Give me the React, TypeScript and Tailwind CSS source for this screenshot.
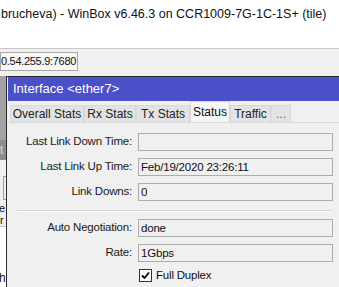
import React from 'react';

const tabs = ['Overall Stats', 'Rx Stats', 'Tx Stats', 'Status', 'Traffic', '...'];
const tabWidths = ['w-[74px]', 'w-[52px]', 'w-[54px]', 'w-[40px]', 'w-[41px]', 'w-[20px]'];

function Field({ label, value }: { label: string; value: string }) {
  return (
    <div className="flex items-center h-[18px]">
      <div className="w-[126px] shrink-0 pr-[1px] text-right text-[11.5px] tracking-[-0.2px] text-[#1a1a1a] whitespace-nowrap">{label}</div>
      <div className="ml-[5px] w-[195px] h-[18px] border border-[#acacac] bg-[#f0f0f0] px-[2px] text-[11.5px] tracking-[-0.2px] leading-[16px] text-[#111]">
        {value}
      </div>
    </div>
  );
}

export default function App() {
  return (
    <div className="w-[339px] h-[287px] overflow-hidden bg-white flex flex-col" style={{ fontFamily: '"Liberation Sans", Arial, sans-serif' }}>
      {/* Window caption */}
      <div className="h-[48px] shrink-0 pt-[5px] pl-[1px] text-[12.5px] text-[#111] whitespace-nowrap">
        brucheva) - WinBox v6.46.3 on CCR1009-7G-1C-1S+ (tile)
      </div>

      {/* Toolbar */}
      <div className="h-[28px] shrink-0 border-t border-[#c8c8c8] bg-[#f0f0f0] pt-[3px]">
        <div className="w-[78px] h-[19px] border border-[#a8a8a8] bg-[#f7f7f7] text-[11px] tracking-[-0.3px] leading-[17px] text-[#111] whitespace-nowrap">0.54.255.9:7680</div>
      </div>

      {/* Desktop area */}
      <div className="flex flex-1 min-h-0">
        {/* Windows behind */}
        <div className="w-[6px] shrink-0 flex flex-col overflow-hidden bg-[#f0f0f0]">
          <div className="h-[64px] shrink-0 bg-[#a3a3a3]" />
          <div className="h-[20px] shrink-0 bg-[#8c8c8c] text-[12px] leading-[20px] text-[#d8d8d8] whitespace-nowrap -ml-[6px]">st</div>
          <div className="h-[16px] shrink-0" />
          <div className="h-[24px] shrink-0 border-t border-b border-l border-[#9a9a9a] ml-[3px]" />
          <div className="h-[10px] shrink-0 mt-[3px] text-[11px] leading-[10px] text-[#111] whitespace-nowrap -ml-[1px]">e</div>
          <div className="h-[13px] shrink-0 mt-[1px] border-b border-[#c8c8c8] text-[11px] leading-[12px] text-[#111] whitespace-nowrap -ml-[6px]">or</div>
          <div className="flex-1 bg-white flex items-end">
            <div className="text-[12px] leading-[14px] text-[#111] whitespace-nowrap -ml-[1px] mb-[2px]">h</div>
          </div>
        </div>

        {/* Interface window */}
        <div className="flex-1 flex flex-col border-l border-t border-[#2a2a2a] bg-[#f0f0f0]">
          <div className="h-[24px] shrink-0 bg-[#4b4fc8] pl-[5px] ml-[1px] text-[13px] leading-[24px] text-white whitespace-nowrap">
            Interface &lt;ether7&gt;
          </div>

          {/* Tabs */}
          <div className="h-[21px] shrink-0 flex items-end pl-[3px]">
            {tabs.map((t, i) =>
              t === 'Status' ? (
                <div key={t} className={`${tabWidths[i]} h-[21px] border border-b-0 border-[#d4d4d4] bg-[#f6f6f6] text-center text-[12px] leading-[20px] text-[#111]`}>
                  {t}
                </div>
              ) : (
                <div key={t} className={`${tabWidths[i]} h-[17px] border border-b-0 border-[#d9d9d9] bg-[#e3e3e3] text-center text-[12px] leading-[17px] ${t === '...' ? 'text-[#666]' : 'text-[#222]'}`}>
                  {t}
                </div>
              )
            )}
          </div>

          {/* Status panel */}
          <div className="flex-1 border-t border-[#d9d9d9] pt-[10px] flex flex-col">
            <div className="flex flex-col gap-[7px]">
              <Field label="Last Link Down Time:" value="" />
              <Field label="Last Link Up Time:" value="Feb/19/2020 23:26:11" />
              <Field label="Link Downs:" value="0" />
            </div>
            <div className="ml-[10px] mr-[6px] mt-[9px] mb-[7px] h-[2px] border-t border-[#d6d6d6] border-b border-b-white" />
            <div className="flex flex-col gap-[7px]">
              <Field label="Auto Negotiation:" value="done" />
              <Field label="Rate:" value="1Gbps" />
            </div>
            <div className="flex items-center mt-[5px] ml-[132px]">
              <div className="w-[13px] h-[13px] border border-[#333] bg-white flex items-center justify-center">
                <svg width="9" height="9" viewBox="0 0 9 9">
                  <path d="M1 4.5 L3.5 7 L8 1.5" stroke="#000" strokeWidth="1.8" fill="none" />
                </svg>
              </div>
              <span className="ml-[4px] text-[11.5px] tracking-[-0.2px] text-[#111]">Full Duplex</span>
            </div>
          </div>
        </div>
      </div>
    </div>
  );
}
